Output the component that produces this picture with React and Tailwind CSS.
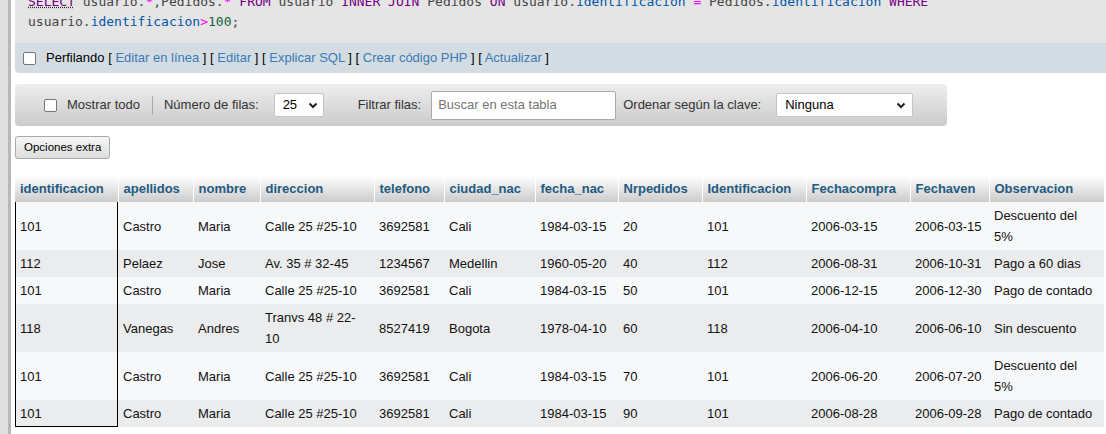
import React from 'react';

const columns = [
  { name: 'identificacion', w: 'w-[103px]' },
  { name: 'apellidos', w: 'w-[75px]' },
  { name: 'nombre', w: 'w-[67px]' },
  { name: 'direccion', w: 'w-[114px]' },
  { name: 'telefono', w: 'w-[70px]' },
  { name: 'ciudad_nac', w: 'w-[91px]' },
  { name: 'fecha_nac', w: 'w-[83px]' },
  { name: 'Nrpedidos', w: 'w-[84px]' },
  { name: 'Identificacion', w: 'w-[104px]' },
  { name: 'Fechacompra', w: 'w-[104px]' },
  { name: 'Fechaven', w: 'w-[79px]' },
  { name: 'Observacion', w: 'w-[115px]' },
];

const rows = [
  ['101', 'Castro', 'Maria', 'Calle 25 #25-10', '3692581', 'Cali', '1984-03-15', '20', '101', '2006-03-15', '2006-03-15', 'Descuento del 5%'],
  ['112', 'Pelaez', 'Jose', 'Av. 35 # 32-45', '1234567', 'Medellin', '1960-05-20', '40', '112', '2006-08-31', '2006-10-31', 'Pago a 60 dias'],
  ['101', 'Castro', 'Maria', 'Calle 25 #25-10', '3692581', 'Cali', '1984-03-15', '50', '101', '2006-12-15', '2006-12-30', 'Pago de contado'],
  ['118', 'Vanegas', 'Andres', 'Tranvs 48 # 22-10', '8527419', 'Bogota', '1978-04-10', '60', '118', '2006-04-10', '2006-06-10', 'Sin descuento'],
  ['101', 'Castro', 'Maria', 'Calle 25 #25-10', '3692581', 'Cali', '1984-03-15', '70', '101', '2006-06-20', '2006-07-20', 'Descuento del 5%'],
  ['101', 'Castro', 'Maria', 'Calle 25 #25-10', '3692581', 'Cali', '1984-03-15', '90', '101', '2006-08-28', '2006-09-28', 'Pago de contado'],
];

const Checkbox = () => (
  <span className="inline-block w-[13px] h-[13px] shrink-0 rounded-[2px] border border-[#767676] bg-white" />
);

const Chevron = () => (
  <svg width="10" height="7" viewBox="0 0 10 7">
    <path d="M1.5 1.5L5 5L8.5 1.5" stroke="#222" strokeWidth="2" fill="none" />
  </svg>
);

const Kw = ({ children }) => <span className="text-[#770088]">{children}</span>;
const Op = ({ children }) => <span className="text-[#ff00ff]">{children}</span>;
const Col = ({ children }) => <span className="text-[#0055aa]">{children}</span>;

const Link = ({ children }) => <span className="text-[#3b7ab5]">{children}</span>;

export default function App() {
  return (
    <div className="flex w-[1106px] h-[434px] overflow-hidden bg-white font-['Liberation_Sans',Arial,sans-serif] text-[13px]">
      <div className="w-[8px] bg-[#e0e0e0]" />
      <div className="w-[3px] bg-[#b8b8b8]" />
      <div className="flex-1 min-w-0 pl-[4px]">
        {/* SQL query box */}
        <div className="h-[43px] overflow-hidden bg-[#e5e5e5] pl-[13px]">
          <div className="-mt-[8px] whitespace-pre font-['DejaVu_Sans_Mono',monospace] text-[13px] leading-[20px] text-[#444]">
            <div>
              <span className="text-[#770088] underline decoration-dotted decoration-[#222]">SELECT</span>
              {' usuario.'}<Op>*</Op>{',Pedidos.'}<Op>*</Op>{' '}
              <Kw>FROM</Kw>{' usuario '}<Kw>INNER JOIN</Kw>{' Pedidos '}<Kw>ON</Kw>
              {' usuario.'}<Col>identificacion</Col>{' '}<Op>=</Op>{' Pedidos.'}<Col>identificacion</Col>{' '}
              <Kw>WHERE</Kw>
            </div>
            <div>
              {'usuario.'}<Col>identificacion</Col><Op>&gt;</Op>
              <span className="text-[#116644]">100</span>;
            </div>
          </div>
        </div>

        {/* Profiling bar */}
        <div className="h-[30px] flex items-center bg-[#d3dce3] rounded-bl-[4px] pl-[8px] text-black whitespace-pre">
          <Checkbox />
          <span className="ml-[10px]">
            Perfilando [ <Link>Editar en línea</Link> ] [ <Link>Editar</Link> ] [ <Link>Explicar SQL</Link> ] [ <Link>Crear código PHP</Link> ] [ <Link>Actualizar</Link> ]
          </span>
        </div>

        {/* Navigation bar */}
        <div className="mt-[11px] w-[932px] h-[42px] flex items-center rounded-[4px] bg-linear-to-b from-[#eeeeee] to-[#cbcbcb] pl-[29px] text-[#333]">
          <Checkbox />
          <span className="ml-[10px]">Mostrar todo</span>
          <span className="ml-[12px] w-px h-[19px] bg-[#aaa]" />
          <span className="ml-[11px]">Número de filas:</span>
          <div className="ml-[15px] w-[50px] h-[24px] flex items-center justify-between rounded-[2px] border border-[#c4c4c4] bg-white pl-[8px] pr-[5px] text-black">
            <span>25</span>
            <Chevron />
          </div>
          <span className="ml-[34px]">Filtrar filas:</span>
          <div className="ml-[10px] w-[185px] h-[29px] flex items-center rounded-[2px] border border-[#aaa] bg-white pl-[6px] text-[#757575]">
            Buscar en esta tabla
          </div>
          <span className="ml-[7px]">Ordenar según la clave:</span>
          <div className="ml-[15px] w-[137px] h-[24px] flex items-center justify-between rounded-[2px] border border-[#c4c4c4] bg-white pl-[8px] pr-[6px] text-black">
            <span>Ninguna</span>
            <Chevron />
          </div>
        </div>

        {/* Extra options */}
        <button className="mt-[10px] h-[23px] px-[8px] rounded-[3px] border border-[#aaa] bg-linear-to-b from-[#f6f6f6] to-[#dedede] text-[11.5px] text-black">
          Opciones extra
        </button>

        {/* Results table */}
        <table className="mt-[17px] table-fixed border-collapse w-[1089px]">
          <colgroup>
            {columns.map(c => (
              <col key={c.name} className={c.w} />
            ))}
          </colgroup>
          <thead>
            <tr className="bg-linear-to-b from-white to-[#cccccc]">
              {columns.map(c => (
                <th
                  key={c.name}
                  className="h-[26px] pl-[5px] text-left font-bold text-[#235a81] border-r border-white whitespace-nowrap"
                >
                  {c.name}
                </th>
              ))}
            </tr>
          </thead>
          <tbody>
            {rows.map((row, i) => (
              <tr key={i} className={i % 2 === 0 ? 'bg-[#f7f8fa]' : 'bg-[#ebeced]'}>
                {row.map((cell, j) => (
                  <td
                    key={j}
                    className={`py-[3px] pl-[5px] leading-[21px] align-middle text-[#111] ${
                      j === 11 ? 'pr-[10px]' : 'pr-[5px]'
                    } ${
                      j === 0
                        ? i === rows.length - 1
                          ? 'shadow-[inset_1px_0_0_#000,inset_-1px_0_0_#000,inset_0_-1px_0_#000]'
                          : 'shadow-[inset_1px_0_0_#000,inset_-1px_0_0_#000]'
                        : ''
                    }`}
                  >
                    {cell}
                  </td>
                ))}
              </tr>
            ))}
          </tbody>
        </table>
      </div>
    </div>
  );
}
